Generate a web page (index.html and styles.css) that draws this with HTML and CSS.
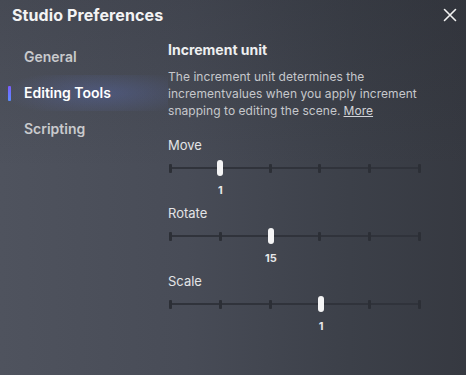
FILE: index.html
```html
<!DOCTYPE html>
<html lang="en">
<head>
    <meta charset="UTF-8">
    <meta name="viewport" content="width=device-width, initial-scale=1.0">
    <title>Studio Preferences</title>
    <link rel="stylesheet" href="styles.css">
</head>
<body>
    <div class="dialog">
        <div class="header">
            <h1>Studio Preferences</h1>
            <button class="close" aria-label="Close">
                <svg width="14" height="14" viewBox="0 0 14 14">
                    <path d="M1.5 1.5 L12.5 12.5 M12.5 1.5 L1.5 12.5" stroke="#f2f2f2" stroke-width="1.6" stroke-linecap="round"/>
                </svg>
            </button>
        </div>

        <div class="main">
            <nav class="sidebar">
                <a class="nav-item">General</a>
                <a class="nav-item active">Editing Tools</a>
                <a class="nav-item">Scripting</a>
            </nav>

            <div class="content">
                <h2>Increment unit</h2>
                <p class="desc">The increment unit determines the incrementvalues when you apply increment snapping to editing the scene.<a class="more">More</a></p>

                <div class="slider-group first">
                    <div class="slider-label">Move</div>
                    <div class="track">
                        <span class="tick"></span><span class="tick"></span><span class="tick"></span>
                        <span class="tick"></span><span class="tick"></span><span class="tick"></span>
                        <span class="thumb" style="left: 20%"></span>
                    </div>
                    <div class="value-row"><span class="value" style="left: 20%">1</span></div>
                </div>

                <div class="slider-group">
                    <div class="slider-label">Rotate</div>
                    <div class="track">
                        <span class="tick"></span><span class="tick"></span><span class="tick"></span>
                        <span class="tick"></span><span class="tick"></span><span class="tick"></span>
                        <span class="thumb" style="left: 40%"></span>
                    </div>
                    <div class="value-row"><span class="value" style="left: 40%">15</span></div>
                </div>

                <div class="slider-group">
                    <div class="slider-label">Scale</div>
                    <div class="track">
                        <span class="tick"></span><span class="tick"></span><span class="tick"></span>
                        <span class="tick"></span><span class="tick"></span><span class="tick"></span>
                        <span class="thumb" style="left: 60%"></span>
                    </div>
                    <div class="value-row"><span class="value" style="left: 60%">1</span></div>
                </div>
            </div>
        </div>
    </div>
</body>
</html>
```

FILE: styles.css
```css
* {
    margin: 0;
    padding: 0;
    box-sizing: border-box;
}

body {
    font-family: Inter, "Noto Sans", sans-serif;
    width: 466px;
    height: 375px;
    overflow: hidden;
    color: #e8e9eb;
}

.dialog {
    width: 466px;
    height: 375px;
    background:
        linear-gradient(180deg, rgba(30,32,38,0.18) 0%, rgba(30,32,38,0) 45%),
        linear-gradient(90deg, #4f535e 0%, #484c57 40%, #3c4049 75%, #363941 100%);
}

.header {
    height: 30px;
    display: flex;
    align-items: center;
    justify-content: space-between;
    padding: 0 9px 0 12px;
}

.header h1 {
    font-size: 16px;
    font-weight: 700;
    line-height: 20px;
    color: #f3f3f4;
    letter-spacing: 0.1px;
}

.close {
    background: none;
    border: none;
    width: 14px;
    height: 14px;
    display: flex;
    cursor: pointer;
}

.main {
    display: flex;
}

.sidebar {
    flex: 0 0 168px;
    padding-top: 9px;
    display: flex;
    flex-direction: column;
}

.nav-item {
    position: relative;
    height: 36px;
    line-height: 36px;
    padding-left: 24px;
    font-size: 14px;
    font-weight: 600;
    color: #c9cacd;
}

.nav-item.active {
    color: #ffffff;
    background: radial-gradient(ellipse 100px 24px at 100px 50%, rgba(92, 112, 190, 0.36), rgba(92, 112, 190, 0) 100%);
}

.nav-item.active::before {
    content: "";
    position: absolute;
    left: 8px;
    top: 11px;
    width: 3px;
    height: 15px;
    border-radius: 1px;
    background: linear-gradient(180deg, #7b5cff 0%, #5b8dff 100%);
}

.content {
    flex: 1;
    min-width: 0;
}

.content h2 {
    margin-top: 10px;
    font-size: 14px;
    font-weight: 700;
    line-height: 20px;
    color: #eeeff0;
}

.desc {
    margin-top: 8px;
    font-size: 12px;
    line-height: 17px;
    letter-spacing: 0.05px;
    color: #c6c8cc;
    width: 262px;
}

.more {
    color: #d2d4d8;
    text-decoration: underline;
    margin-left: 3px;
}

.slider-group {
    margin-top: 6px;
}

.slider-group.first {
    margin-top: 17px;
}

.slider-label {
    font-size: 13px;
    line-height: 18px;
    color: #e3e4e6;
}

.track {
    position: relative;
    margin-top: 6px;
    width: 252px;
    height: 16px;
    margin-left: 1px;
    display: flex;
    align-items: center;
    justify-content: space-between;
}

.track::before {
    content: "";
    position: absolute;
    left: 0;
    right: 0;
    top: 7px;
    height: 2px;
    background: #30333b;
}

.tick {
    position: relative;
    width: 3px;
    height: 9px;
    border-radius: 1px;
    background: #2c2f36;
}

.thumb {
    position: absolute;
    top: 0;
    width: 6px;
    height: 16px;
    margin-left: -2px;
    border-radius: 3px;
    background: #f4f4f5;
}

.value-row {
    position: relative;
    margin-top: 7px;
    width: 252px;
    height: 15px;
}

.value {
    position: absolute;
    top: 0;
    transform: translateX(-50%);
    margin-left: 2px;
    font-size: 11px;
    font-weight: 700;
    line-height: 15px;
    color: #e6e7e9;
}
```
